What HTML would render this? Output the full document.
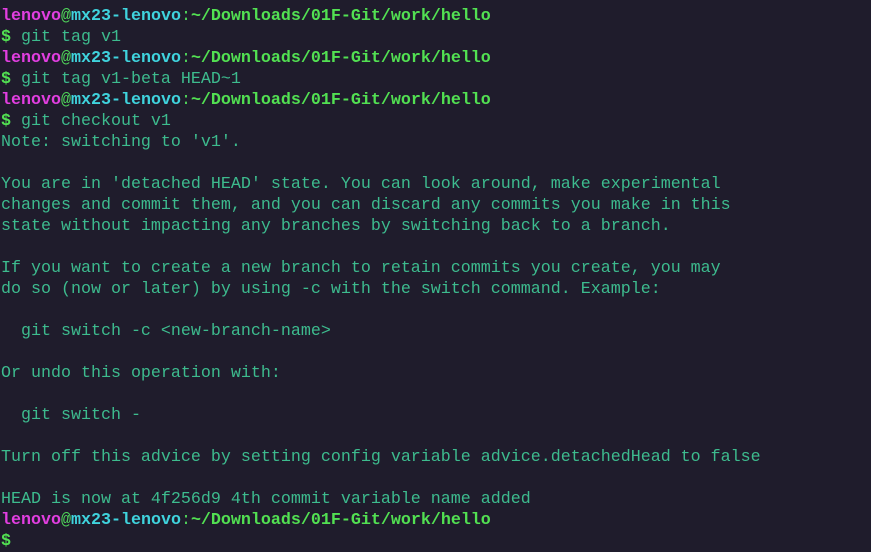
<!DOCTYPE html><html><head><style>
html,body{margin:0;background:#1f1c2c;width:871px;height:546px;overflow:hidden}
pre{margin:0;position:absolute;left:1px;top:-15px;font-family:"Liberation Mono",monospace;font-size:16.67px;line-height:21px;color:#3dbb8e}
.u{color:#e13ee0;font-weight:bold}.a{color:#4fd55a}.h{color:#3fd3dd;font-weight:bold}.p{color:#52e052;font-weight:bold}.d{color:#52e052;font-weight:bold}
</style></head><body><pre><span class="a"></span>
<span class="u">lenovo</span><span class="a">@</span><span class="h">mx23-lenovo</span><span class="a">:</span><span class="p">~/Downloads/01F-Git/work/hello</span>
<span class="d">$</span> git tag v1
<span class="u">lenovo</span><span class="a">@</span><span class="h">mx23-lenovo</span><span class="a">:</span><span class="p">~/Downloads/01F-Git/work/hello</span>
<span class="d">$</span> git tag v1-beta HEAD~1
<span class="u">lenovo</span><span class="a">@</span><span class="h">mx23-lenovo</span><span class="a">:</span><span class="p">~/Downloads/01F-Git/work/hello</span>
<span class="d">$</span> git checkout v1
Note: switching to 'v1'.

You are in 'detached HEAD' state. You can look around, make experimental
changes and commit them, and you can discard any commits you make in this
state without impacting any branches by switching back to a branch.

If you want to create a new branch to retain commits you create, you may
do so (now or later) by using -c with the switch command. Example:

  git switch -c &lt;new-branch-name&gt;

Or undo this operation with:

  git switch -

Turn off this advice by setting config variable advice.detachedHead to false

HEAD is now at 4f256d9 4th commit variable name added
<span class="u">lenovo</span><span class="a">@</span><span class="h">mx23-lenovo</span><span class="a">:</span><span class="p">~/Downloads/01F-Git/work/hello</span>
<span class="d">$</span></pre></body></html>
